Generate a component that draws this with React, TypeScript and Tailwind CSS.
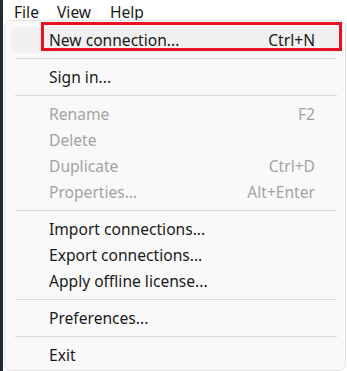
import React from "react";

type Item =
  | { kind: "sep" }
  | { kind: "item"; label: string; shortcut?: string; disabled?: boolean; active?: boolean };

const items: Item[] = [
  { kind: "item", label: "New connection...", shortcut: "Ctrl+N", active: true },
  { kind: "sep" },
  { kind: "item", label: "Sign in..." },
  { kind: "sep" },
  { kind: "item", label: "Rename", shortcut: "F2", disabled: true },
  { kind: "item", label: "Delete", disabled: true },
  { kind: "item", label: "Duplicate", shortcut: "Ctrl+D", disabled: true },
  { kind: "item", label: "Properties...", shortcut: "Alt+Enter", disabled: true },
  { kind: "sep" },
  { kind: "item", label: "Import connections..." },
  { kind: "item", label: "Export connections..." },
  { kind: "item", label: "Apply offline license..." },
  { kind: "sep" },
  { kind: "item", label: "Preferences..." },
  { kind: "sep" },
  { kind: "item", label: "Exit" },
];

export default function App() {
  return (
    <div
      className="relative flex w-[347px] h-[371px] bg-white overflow-hidden text-[15.6px] text-[#1a1a1a]"
      style={{ fontFamily: '"Noto Sans", "Open Sans", sans-serif' }}
    >
      <div className="w-[3px] shrink-0 bg-[#1e2a35]" />
      <div className="flex flex-col flex-1">
        <div className="h-[20px] flex items-start pl-[11px]">
          <span className="w-[43px] leading-[25px]">File</span>
          <span className="w-[53px] leading-[25px]">View</span>
          <span className="leading-[25px]">Help</span>
        </div>
        <div className="ml-[1px] mr-[1px] h-[360px] rounded-[7px] border border-[#e3e3e3] bg-[#f9f9f9] pt-[6px] pl-[6px] pr-[7px]">
          {items.map((it, i) =>
            it.kind === "sep" ? (
              <div key={i} className="my-[5px] ml-[4px] mr-[1px] h-px bg-[#d9d9d9]" />
            ) : (
              <div
                key={i}
                className={
                  "flex h-[26px] items-center justify-between rounded-[4px] pt-[2px] pl-[38px] pr-[23px] " +
                  (it.active ? "bg-[#f0f0f0] " : "") +
                  (it.disabled ? "text-[#a3a3a3]" : "")
                }
              >
                <span>{it.label}</span>
                {it.shortcut && <span>{it.shortcut}</span>}
              </div>
            )
          )}
        </div>
      </div>
      <div className="absolute left-[41px] top-[22px] w-[301px] h-[29px] border-[3px] border-[#e81123]" />
    </div>
  );
}
